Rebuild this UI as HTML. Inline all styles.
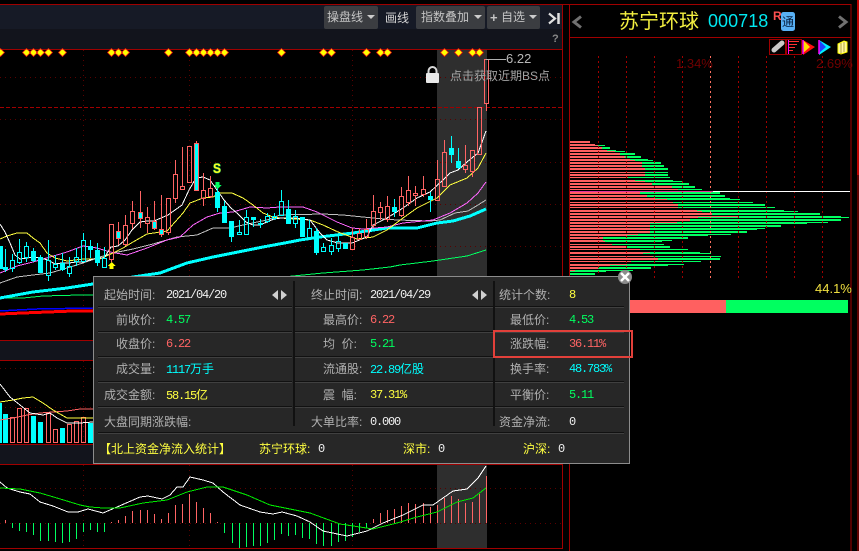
<!DOCTYPE html>
<html><head><meta charset="utf-8"><style>
html,body{margin:0;padding:0;background:#000;width:859px;height:551px;overflow:hidden}
#r{position:relative;width:859px;height:551px;overflow:hidden;font-family:"Liberation Sans","WenQuanYi Zen Hei","Noto Sans CJK SC",sans-serif}
svg{position:absolute;left:0;top:0}
.a{position:absolute;white-space:pre;line-height:14px}
.btn{position:absolute;top:6px;height:23px;background:#3b3d41;border-radius:2px;color:#c4c4c4;font-size:12px;line-height:23px;white-space:pre}
.l{position:absolute;white-space:pre;font-size:12px;line-height:14px;color:#b0b0b0}
.v{position:absolute;white-space:pre;font:12px/14px "Liberation Mono","WenQuanYi Zen Hei","Noto Sans CJK SC",monospace;letter-spacing:-1.2px}
.v i{font:12px/14px "WenQuanYi Zen Hei","Noto Sans CJK SC",sans-serif;letter-spacing:0}
.R{color:#ff6464}.G{color:#00ff60}.C{color:#00ffff}.Y{color:#ffff40}.W{color:#f0f0f0}
</style></head><body><div id="r">
<svg width="859" height="551" viewBox="0 0 859 551" shape-rendering="crispEdges">
<defs><pattern id="gap" x="570" y="141" width="10" height="3" patternUnits="userSpaceOnUse"><rect x="0" y="2" width="10" height="1" fill="#000"/></pattern></defs>
<rect x="0" y="5" width="562" height="24" fill="#161a26"/><rect x="0" y="29" width="562" height="20" fill="#12141c"/>
<rect x="0" y="341" width="562" height="19" fill="#12141c"/><rect x="0" y="445" width="562" height="19" fill="#12141c"/>
<rect x="437" y="50" width="50" height="498" fill="#2e2e2e"/>
<g stroke="#5a0000" stroke-dasharray="1 4" fill="none">
<path d="M0 77.5H562M0 119.5H562M0 162.5H562M0 204.5H562M0 246.5H562M0 368.5H562M0 407.5H562M0 488.5H562M0 523.5H562"/>
<path d="M83.5 50V314M189.5 50V314M352.5 50V314M83.5 361V444M189.5 361V444M352.5 361V444M83.5 465V548M189.5 465V548M352.5 465V548"/>
</g>
<path d="M0 107.5H562" stroke="#a00000" stroke-dasharray="4 2" fill="none"/>
<g stroke="#a00000" fill="none">
<path d="M0 4.5H851M0 49.5H562M0 340.5H562M0 360.5H562M0 444.5H562M0 464.5H562M0 548.5H562M562.5 4V549M569.5 4V551M851 4V551M570 37.5H851"/>
</g>
<rect x="857" y="0" width="2" height="175" fill="#c00000"/><rect x="857" y="175" width="2" height="376" fill="#600000"/>
<path shape-rendering="auto" fill="#ffff00" stroke="#e01010" stroke-width=".8" d="M0.5 48.500l4 4-4 4-4-4zM26.500 48.500l4 4-4 4-4-4zM33.500 48.500l4 4-4 4-4-4zM40.500 48.500l4 4-4 4-4-4zM48.500 48.500l4 4-4 4-4-4zM62.500 48.500l4 4-4 4-4-4zM111.500 48.500l4 4-4 4-4-4zM118.500 48.500l4 4-4 4-4-4zM125.500 48.500l4 4-4 4-4-4zM168.500 48.500l4 4-4 4-4-4zM189.500 48.500l4 4-4 4-4-4zM196.500 48.500l4 4-4 4-4-4zM203.500 48.500l4 4-4 4-4-4zM210.500 48.500l4 4-4 4-4-4zM217.500 48.500l4 4-4 4-4-4zM224.500 48.500l4 4-4 4-4-4zM281.500 48.500l4 4-4 4-4-4zM323.500 48.500l4 4-4 4-4-4zM331.500 48.500l4 4-4 4-4-4zM366.500 48.500l4 4-4 4-4-4zM380.500 48.500l4 4-4 4-4-4zM387.500 48.500l4 4-4 4-4-4zM444.500 48.500l4 4-4 4-4-4zM458.500 48.500l4 4-4 4-4-4zM472.500 48.500l4 4-4 4-4-4zM479.500 48.500l4 4-4 4-4-4z"/>
<g fill="none" stroke-linejoin="round">
<polyline stroke="#00ff60" points="0,298 23,298 43,296 80,295 93,295 293,276 323,273 363,270 390,267 400,265 433,261 467,256 486,250"/>
<polyline stroke="#0000ff" stroke-width="1.5" points="0,311 17,310 37,309 93,308"/>
<polyline stroke="#ff0000" stroke-width="3" points="0,314 23,313 73,311 93,311"/>
<polyline stroke="#00ffff" stroke-width="3" points="0,298 33,292 67,288 93,284 133,277 160,273 187,263 213,257 233,253 263,247 290,242 300,240 320,237 353,233 387,228 417,228 437,223 453,221 470,216 486,209"/>
<polyline stroke="#c0c0c0" points="0,283 17,277 33,275 50,273 67,268 83,263 100,257 113,253 133,249 153,244 177,237 197,235 213,228 230,228 243,225 267,220 280,215 323,214 343,215 373,218 397,220 430,221 440,220 455,213 468,211 478,205 486,200"/>
<polyline stroke="#ff66ff" points="0,273 17,266 33,262 50,257 67,252 83,246 97,248 110,252 127,255 147,248 167,240 180,237 193,225 207,217 220,213 233,212 250,207 267,208 280,207 303,207 317,212 337,222 352,228 363,229 387,227 403,223 433,220 450,213 467,203 478,193 486,182"/>
<polyline stroke="#ffff40" points="0,239 7,236 17,233 27,233 33,238 40,243 47,253 55,258 67,261 83,259 100,259 113,253 123,248 133,242 147,234 167,231 183,213 190,203 203,198 213,197 220,193 232,193 243,198 253,205 263,213 273,217 280,218 310,220 323,225 338,232 357,239 373,237 387,230 403,218 417,208 437,198 450,185 467,178 478,168 486,153"/>
<polyline stroke="#ffffff" points="0,224 5,232 10,243 15,255 20,259 27,258 33,257 40,258 48,260 55,264 62,263 69,263 76,262 83,262 97,258 104,258 111,247 118,246 125,240 132,230 140,222 147,221 154,221 161,218 168,215 175,210 182,205 189,190 196,178 203,177 210,180 217,190 224,200 231,208 238,214 246,222 253,225 260,225 267,222 274,219 281,218 295,218 310,220 320,233 327,240 338,243 352,243 367,237 373,225 387,218 403,208 417,198 430,192 443,180 450,173 458,170 467,162 478,153 486,131"/>
</g>
<path fill="#00ffff" stroke="#00ffff" d="M0.5 246V268M-1.500 246.500h4v22h-4zM5.500 249V272M3.500 267.500h4v2h-4zM33.500 248V262M31.500 251.500h4v9h-4zM40.500 255V272M38.500 257.500h4v15h-4zM62.500 253V271M60.500 263.500h4v6h-4zM90.500 240V258M88.500 246.500h4v3h-4zM97.500 243V266M95.500 250.500h4v12h-4zM217.500 183V212M215.500 192.500h4v15h-4zM224.500 201V222M222.500 206.500h4v16h-4zM231.500 221V242M229.500 221.500h4v15h-4zM253.500 217V227M251.500 217.500h4v2h-4zM260.500 219V228M258.500 223.500h4v1h-4zM288.500 200V223M286.500 209.500h4v14h-4zM302.500 217V236M300.500 217.500h4v19h-4zM316.500 228V255M314.500 231.500h4v21h-4zM345.500 243V248M343.500 243.500h4v5h-4zM394.500 199V217M392.500 207.500h4v4h-4zM430.500 192V212M428.500 196.500h4v3h-4zM451.500 136V163M449.500 148.500h4v6h-4zM458.500 148V169M456.500 161.500h4v6h-4z"/>
<path fill="none" stroke="#00ffff" d="M12.500 254V260M12.500 268V272M10.500 260.500h4v8h-4zM19.500 239V252M19.500 262V264M17.500 252.500h4v10h-4zM26.500 242V246M26.500 257V262M24.500 246.500h4v11h-4zM48.500 240V260M48.500 275V281M46.500 260.500h4v15h-4zM55.500 255V264M55.500 267V270M53.500 264.500h4v3h-4zM69.500 257V266M69.500 273V277M67.500 266.500h4v7h-4zM76.500 248V257M76.500 261V266M74.500 257.500h4v4h-4zM83.500 233V240M81.500 240.500h4v21h-4zM104.500 247V258M102.500 258.500h4v9h-4zM239.500 220V232M237.500 232.500h4v2h-4zM246.500 210V217M244.500 217.500h4v17h-4zM267.500 213V216M267.500 221V223M265.500 216.500h4v5h-4zM274.500 213V216M274.500 218V220M272.500 216.500h4v2h-4zM281.500 190V201M279.500 201.500h4v14h-4zM295.500 210V216M295.500 223V228M293.500 216.500h4v7h-4zM309.500 220V228M307.500 228.500h4v10h-4zM323.500 243V247M321.500 247.500h4v4h-4zM331.500 238V245M331.500 251V255M329.500 245.500h4v6h-4zM338.500 233V241M338.500 248V252M336.500 241.500h4v7h-4z"/>
<path fill="#00ffff" stroke="#ff6464" d="M116.500 231.500h4v7h-4zM138.500 212.500h4v6h-4zM152.500 221.500h4v7h-4zM159.500 229.500h4v5h-4zM194.500 143.500h4v47h-4z"/>
<path fill="none" stroke="#ff6464" d="M118.500 222V231M118.500 238V245M140.500 191V212M140.500 218V228M154.500 201V221M154.500 228V230M161.500 195V229M161.500 234V237M196.500 141V143M111.500 259V262M109.500 224.500h4v35h-4zM125.500 215V225M125.500 244V246M123.500 225.500h4v19h-4zM132.500 201V211M132.500 223V229M130.500 211.500h4v12h-4zM147.500 207V217M147.500 223V233M145.500 217.500h4v6h-4zM168.500 232V235M166.500 198.500h4v34h-4zM175.500 160V174M175.500 198V203M173.500 174.500h4v24h-4zM182.500 147V186M180.500 186.500h4v3h-4zM187.500 146.500h4v36h-4zM203.500 173V190M203.500 198V206M201.500 190.500h4v8h-4zM210.500 176V188M210.500 196V198M208.500 188.500h4v8h-4zM352.500 228V237M350.500 237.500h4v12h-4zM359.500 228V233M357.500 233.500h4v6h-4zM366.500 219V229M366.500 236V239M364.500 229.500h4v7h-4zM373.500 195V211M373.500 225V228M371.500 211.500h4v14h-4zM380.500 202V207M380.500 212V220M378.500 207.500h4v5h-4zM387.500 196V206M387.500 219V222M385.500 206.500h4v13h-4zM401.500 187V196M401.500 215V217M399.500 196.500h4v19h-4zM408.500 176V190M408.500 202V206M406.500 190.500h4v12h-4zM415.500 186V193M415.500 195V206M413.500 193.500h4v2h-4zM423.500 176V189M423.500 194V197M421.500 189.500h4v5h-4zM437.500 160V179M435.500 179.500h4v21h-4zM444.500 140V152M442.500 152.500h4v34h-4zM465.500 145V165M465.500 169V173M463.500 165.500h4v4h-4zM472.500 171V177M470.500 150.500h4v21h-4zM477.500 107.500h4v47h-4zM486.500 103V111M484.500 59.500h4v44h-4z"/>
<path fill="#ffff00" d="M111.500 262l4 4h-2v3h-4v-3h-2z"/>
<path fill="#00ff60" d="M215.500 182h4v3h2l-4 4-4-4h2z"/>
<text x="213" y="173" font-family="Liberation Sans,sans-serif" font-weight="bold" font-size="14" textLength="8" lengthAdjust="spacingAndGlyphs" fill="#ffff20" stroke="#008040" stroke-width="1.2" paint-order="stroke" shape-rendering="auto">S</text>
<path d="M486 59.500H506" stroke="#b0b0b0" fill="none"/>
<g shape-rendering="auto">
<path d="M428.500 74v-3a4 4 0 0 1 8 0v3" fill="none" stroke="#d8d8d8" stroke-width="2"/>
<rect x="426" y="73" width="13" height="10" rx="1" fill="#e8e8e8"/>
</g>
<path fill="none" stroke="#ff6464" d="M10.500 417.500h4v25h-4zM17.500 408.500h4v34h-4zM24.500 408.500h4v34h-4zM46.500 413.500h4v29h-4zM53.500 429.500h4v13h-4zM67.500 424.500h4v18h-4zM74.500 421.500h4v21h-4zM81.500 417.500h4v25h-4z"/>
<path fill="#00ffff" d="M0 403h2v40h-2zM3 414h5v29h-5zM31 416h5v27h-5zM38 422h5v21h-5zM60 428h5v15h-5zM88 423h6v20h-6z"/>
<g fill="none">
<polyline stroke="#ff6464" points="0,420 13,418 27,415 40,413 53,412 67,411 80,409 93,409"/>
<polyline stroke="#ffff40" points="0,402 13,400 23,398 33,397 43,403 53,410 67,418 93,418"/>
<polyline stroke="#ffffff" points="0,384 10,397 20,405 30,413 43,415 50,413 57,418 67,423 80,423 93,422"/>
</g>
<path stroke="#ff6464" fill="none" d="M5.500 520V523M111.500 522V523M118.500 520V523M125.500 516V523M132.500 511V523M140.500 510V523M147.500 510V523M154.500 514V523M161.500 519V523M168.500 513V523M175.500 505V523M182.500 504V523M189.500 494V523M196.500 502V523M203.500 508V523M210.500 513V523M217.500 522V523M373.500 519V523M380.500 513V523M387.500 510V523M394.500 509V523M401.500 506V523M408.500 503V523M415.500 504V523M423.500 503V523M430.500 507V523M437.500 505V523M444.500 498V523M451.500 496V523M458.500 499V523M465.500 503V523M472.500 502V523M479.500 494V523M486.500 476V523"/>
<path stroke="#00ff60" fill="none" d="M12.500 523V528M19.500 523V531M26.500 523V532M33.500 523V535M40.500 523V541M48.500 523V541M55.500 523V542M62.500 523V543M69.500 523V542M76.500 523V539M83.500 523V532M90.500 523V530M97.500 523V532M104.500 523V532M224.500 523V533M232.500 523V543M239.500 523V548M246.500 523V547M253.500 523V546M260.500 523V546M267.500 523V543M274.500 523V540M281.500 523V534M288.500 523V536M295.500 523V535M302.500 523V538M309.500 523V539M316.500 523V544M323.500 523V546M331.500 523V546M338.500 523V542M345.500 523V541M352.500 523V537M359.500 523V532M366.500 523V528"/>
<g fill="none" stroke-linejoin="round">
<polyline stroke="#ffffff" points="0,482 7,488 20,492 30,494 40,502 53,506 68,512 78,512 88,509 103,513 117,507 140,497 148,496 162,499 170,495 177,487 183,487 190,477 203,480 213,483 223,492 240,505 260,512 273,514 282,512 297,516 310,522 323,531 347,536 367,531 383,523 403,515 423,505 433,505 453,491 467,489 478,478 486,466"/>
<polyline stroke="#00e800" points="0,488 20,489 40,493 57,498 80,505 90,507 103,508 120,508 143,503 167,500 187,492 207,487 223,487 247,495 270,505 310,513 340,524 373,529 397,523 417,517 437,512 457,502 473,498 486,488"/>
</g>
<g fill="none" stroke-width="2">
<path stroke="#00ff60" d="M570 144H595M570 146H605M570 148H610M570 150H616M570 152H625M570 154H635M570 157H641M570 159H648M570 161H653M570 163H661M570 166H664M570 168H668M570 170H668M570 173H668M570 175H668M570 177H670M570 180H673M570 182H682M570 184H689M570 187H695M570 189H702M570 193H720M570 196H725M570 198H730M570 200H740M570 203H753M570 205H765M570 207H775M570 210H784M570 212H798M570 214H820M570 216H841M570 218H849M570 220H841M570 222H828M570 224H807M570 226H781M570 228H765M570 230H757M570 232H747M570 234H731M570 236H708M570 238H688M570 240H672M570 242H662M570 245H664M570 247H670M570 249H688M570 252H700M570 254H711M570 257H721M570 259H720M570 261H701M570 264H684M570 266H668M570 268H651M570 270H633M570 272H606M570 274H595"/>
<path stroke="#ff6060" d="M570 142H590M570 144H595M570 146H598M570 148H602M570 150H607M570 152H615M570 154H620M570 157H625M570 159H630M570 161H635M570 163H642M570 166H642M570 168H645M570 170H645M570 173H645M570 175H645M570 177H628M570 180H635M570 182H645M570 184H652M570 187H672M570 189H678M570 193H640M570 196H647M570 198H655M570 200H667M570 203H673M570 205H678M570 207H678M570 210H697M570 212H702M570 214H712M570 216H738M570 218H698M570 220H690M570 222H677M570 224H650M570 226H650M570 228H650M570 230H650M570 232H650M570 234H638M570 236H627M570 238H603M570 240H603M570 242H605M570 245H612M570 247H627M570 249H640M570 252H650M570 254H643M570 257H653M570 259H658M570 261H631M570 264H627M570 266H610M570 268H598M570 270H575"/>
</g>
<rect x="570" y="141" width="280" height="135" fill="url(#gap)"/>
<g stroke="#a00000" stroke-dasharray="2 3" fill="none"><path d="M598.500 56V281M626.500 56V281M654.500 56V281M682.500 56V281M738.500 56V281M766.500 56V281M794.500 56V281M822.500 56V281"/></g>
<path d="M710.500 56V281" stroke="#ff7060" stroke-dasharray="2 3" fill="none"/>
<path fill="none" stroke="#e030a0" d="M570 191.500H713"/><path fill="none" stroke="#ffffff" d="M713 191.500H850"/>
<rect x="600" y="300" width="126" height="13" fill="#ff6060"/><rect x="726" y="300" width="122" height="13" fill="#00ff60"/>
<g shape-rendering="auto" fill="none">
<path d="M581 16.500l-7 5.500 7 5.500" stroke="#707070" stroke-width="3"/>
<path d="M839 16.500l7 5.500-7 5.500" stroke="#707070" stroke-width="3"/>
<path d="M549 13.500l6 5-6 5" stroke="#e0e0e0" stroke-width="2.200"/><path d="M558.500 13V24" stroke="#e0e0e0" stroke-width="2.500"/>
<rect x="781" y="12" width="14" height="19" rx="2.500" fill="#58b0f4"/>
</g>
<g fill="none">
<rect x="769.500" y="39.500" width="16" height="15" stroke="#a00000"/>
<rect x="786.500" y="39.500" width="15" height="15" stroke="#a00000"/>
<path d="M788.500 40V54" stroke="#ff00ff"/>
<path d="M789 41.500H799M789 44.500H797M789 47.500H795M789 50.500H793" stroke="#ff3030"/>
</g>
<g shape-rendering="auto">
<path d="M774 50L782 43" stroke="#c8c8c8" stroke-width="5" stroke-linecap="round" fill="none"/>
<path d="M803 40l12 7-12 8z" fill="#ff1010"/><path d="M803 40l7 7-7 6z" fill="#ffe000"/><path d="M803 40v14" stroke="#ff00ff" stroke-width="1.500"/>
<path d="M819 40l12 7-12 8z" fill="#00f0ff"/><path d="M819 40l7 7-7 6z" fill="#2040ff"/><path d="M819 40v14" stroke="#ff00ff" stroke-width="1.500"/>
<path d="M838 44l6-3 3 1v10l-6 2-3-1z" fill="#fff8a0" stroke="#ffff00"/>
<path d="M841 43v11M844 42v10" stroke="#807000" stroke-width=".6" fill="none"/>
</g>
</svg>
<div class="btn" style="left:324px;width:54px"><span style="position:absolute;left:3px">操盘线</span><span style="position:absolute;left:43px;top:9px;width:0;height:0;border:4px solid transparent;border-top:4px solid #ccc"></span></div>
<div class="a" style="left:385px;top:11px;font-size:12px;color:#d4d4d4">画线</div>
<div class="btn" style="left:416px;width:69px"><span style="position:absolute;left:5px">指数叠加</span><span style="position:absolute;left:58px;top:9px;width:0;height:0;border:4px solid transparent;border-top:4px solid #ccc"></span></div>
<div class="btn" style="left:487px;width:53px"><span style="position:absolute;left:3px;font-weight:bold;font-size:13px">+</span><span style="position:absolute;left:14px">自选</span><span style="position:absolute;left:42px;top:9px;width:0;height:0;border:4px solid transparent;border-top:4px solid #ccc"></span></div>
<div class="a" style="left:552px;top:32px;font-size:11px;font-weight:bold;color:#888">?</div>
<div class="a" style="left:506px;top:52px;font-size:13px;color:#b8b8b8">6.22</div>
<div class="a" style="left:450px;top:69px;font-size:12px;color:#a4a4a4">点击获取近期BS点</div>
<div class="a" style="left:619px;top:11px;font-size:20px;line-height:22px;color:#f4f040">苏宁环球</div>
<div class="a" style="left:708px;top:11px;font-size:18px;line-height:20px;color:#00e8f0;letter-spacing:.05px">000718</div>
<div class="a" style="left:773px;top:9px;font-size:12px;font-weight:bold;color:#ff5050">R</div>
<div class="a" style="left:782px;top:15px;font-size:12px;color:#082040">通</div>
<div class="a" style="left:676px;top:57px;font-size:13px;color:#700000">1.34%</div>
<div class="a" style="left:816px;top:57px;font-size:13px;color:#700000">2.69%</div>
<div class="a" style="left:815px;top:282px;font-size:13px;color:#f0e040">44.1%</div>
<div style="position:absolute;left:93px;top:276px;width:535px;height:186px;background:#272727;border:1px solid #8c8c8c;box-sizing:content-box"></div>
<svg width="859" height="551" viewBox="0 0 859 551" shape-rendering="crispEdges">
<g fill="none">
<path stroke="#111" d="M98 306.500H292M98 331.500H292M98 356.500H292M98 381.500H292M98 406.500H292M295 306.500H493M295 331.500H493M295 356.500H493M295 381.500H493M295 406.500H493M495 306.500H624M495 331.500H624M495 356.500H624M495 381.500H624M495 406.500H624M98 432.500H624"/>
<path stroke="#404040" d="M98 307.500H292M98 332.500H292M98 357.500H292M98 382.500H292M98 407.500H292M295 307.500H493M295 332.500H493M295 357.500H493M295 382.500H493M295 407.500H493M495 307.500H624M495 332.500H624M495 357.500H624M495 382.500H624M495 407.500H624M98 433.500H624"/>
<path stroke="#111" stroke-width="2" d="M294 281V426M494 281V426"/>
</g>
<g fill="#d0d0d0" shape-rendering="auto">
<path d="M278 290v10l-6-5zM281 290v10l6-5zM478 290v10l-6-5zM481 290v10l6-5z"/>
<circle cx="625" cy="277" r="7" fill="#8c8c8c"/>
<path d="M621 273l8 8M629 273l-8 8" stroke="#fff" stroke-width="2.500"/>
</g>
<rect x="494" y="331" width="138" height="26" fill="none" stroke="#e2403a" stroke-width="2"/>
</svg>
<div class="l" style="left:104px;top:288px">起始时间:</div><div class="v W" style="left:166px;top:288px">2021/04/20</div>
<div class="l" style="left:116px;top:313px">前收价:</div><div class="v G" style="left:166px;top:313px">4.57</div>
<div class="l" style="left:116px;top:337px">收盘价:</div><div class="v R" style="left:166px;top:337px">6.22</div>
<div class="l" style="left:116px;top:362px">成交量:</div><div class="v C" style="left:166px;top:362px">1117<i>万手</i></div>
<div class="l" style="left:104px;top:388px">成交金额:</div><div class="v Y" style="left:166px;top:388px">58.15<i>亿</i></div>
<div class="l" style="left:104px;top:415px">大盘同期涨跌幅:</div>
<div class="l" style="left:311px;top:288px">终止时间:</div><div class="v W" style="left:370px;top:288px">2021/04/29</div>
<div class="l" style="left:323px;top:313px">最高价:</div><div class="v R" style="left:370px;top:313px">6.22</div>
<div class="l" style="left:323px;top:337px">均  价:</div><div class="v G" style="left:370px;top:337px">5.21</div>
<div class="l" style="left:323px;top:362px">流通股:</div><div class="v C" style="left:370px;top:362px">22.89<i>亿股</i></div>
<div class="l" style="left:323px;top:388px">震  幅:</div><div class="v Y" style="left:370px;top:388px">37.31%</div>
<div class="l" style="left:311px;top:415px">大单比率:</div><div class="v W" style="left:370px;top:415px">0.000</div>
<div class="l" style="left:499px;top:288px">统计个数:</div><div class="v Y" style="left:569px;top:288px">8</div>
<div class="l" style="left:510px;top:313px">最低价:</div><div class="v G" style="left:569px;top:313px">4.53</div>
<div class="l" style="left:510px;top:337px">涨跌幅:</div><div class="v R" style="left:569px;top:337px">36.11%</div>
<div class="l" style="left:510px;top:362px">换手率:</div><div class="v C" style="left:569px;top:362px">48.783%</div>
<div class="l" style="left:510px;top:388px">平衡价:</div><div class="v G" style="left:569px;top:388px">5.11</div>
<div class="l" style="left:499px;top:415px">资金净流:</div><div class="v W" style="left:569px;top:415px">0</div>
<div class="l Y" style="left:99px;top:442px">【北上资金净流入统计】</div>
<div class="l Y" style="left:259px;top:442px">苏宁环球:</div><div class="v W" style="left:318px;top:442px">0</div>
<div class="l Y" style="left:403px;top:442px">深市:</div><div class="v W" style="left:438px;top:442px">0</div>
<div class="l Y" style="left:523px;top:442px">沪深:</div><div class="v W" style="left:558px;top:442px">0</div>
</div></body></html>
